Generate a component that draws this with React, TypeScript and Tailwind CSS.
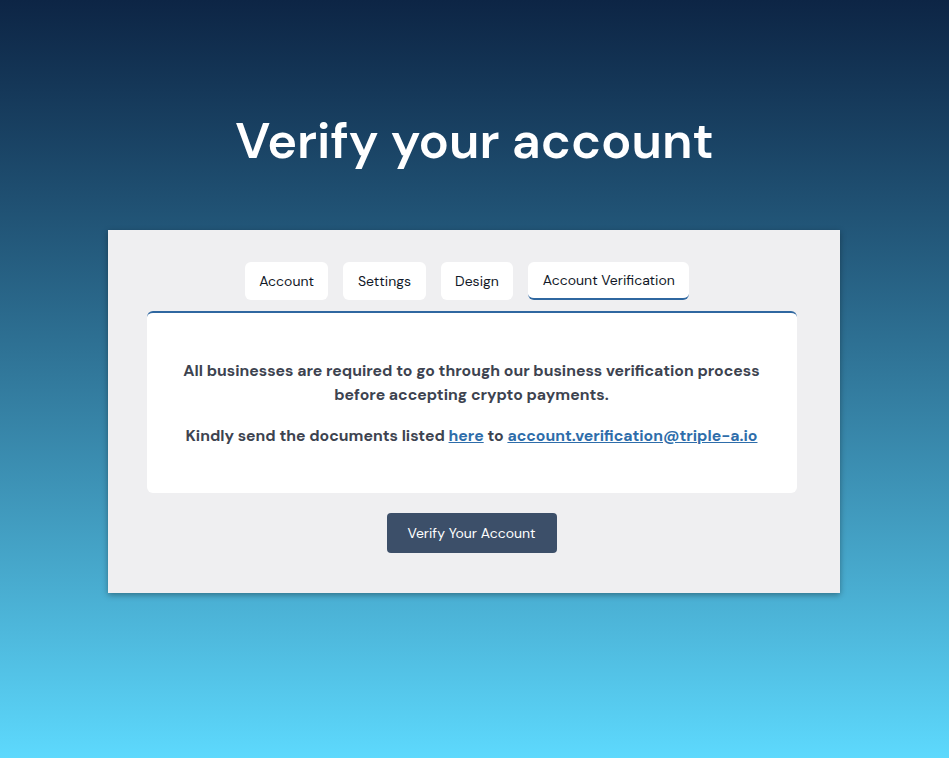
const tabs = ['Account', 'Settings', 'Design', 'Account Verification']

export default function App() {
  const active = 'Account Verification'

  return (
    <div
      className="min-h-[758px] w-full bg-gradient-to-b from-[#0d2545] to-[#5dd9fd] flex flex-col items-center"
      style={{ fontFamily: '"DM Sans", Inter, "Noto Sans", sans-serif' }}
    >
      <h1 className="mt-[108px] text-[50.5px] leading-[66px] font-semibold text-white">
        Verify your account
      </h1>

      <div className="mt-[56px] mr-[2px] w-[732px] bg-[#efeff1] shadow-[0_2px_6px_rgba(0,0,0,0.35)] pt-8 pb-10 pl-[39px] pr-[43px] flex flex-col items-center">
        {/* tabs */}
        <div className="flex gap-[15px] pr-[9px]">
          {tabs.map((t) => (
            <div
              key={t}
              className={
                'h-[38px] px-[14.5px] flex items-center bg-white rounded-md text-[14px] text-[#111827] ' +
                (t === active ? 'border-b-2 border-[#2f67a0]' : '')
              }
            >
              {t}
            </div>
          ))}
        </div>

        <div className="mt-[11px] w-full h-[182px] bg-white rounded-md border-t-2 border-[#2f67a0] flex flex-col items-center justify-center text-center text-[15.8px] font-bold text-[#3d4350] leading-6">
          <p>
            All businesses are required to go through our business verification process
            <br />
            before accepting crypto payments.
          </p>
          <p className="mt-[17px]">
            Kindly send the documents listed{' '}
            <a className="text-[#2e6daa] underline">here</a> to{' '}
            <a className="text-[#2e6daa] underline">account.verification@triple-a.io</a>
          </p>
        </div>

        <button className="mt-5 w-[170px] h-10 rounded bg-[#3c4f69] text-white text-[14px]">
          Verify Your Account
        </button>
      </div>
    </div>
  )
}
